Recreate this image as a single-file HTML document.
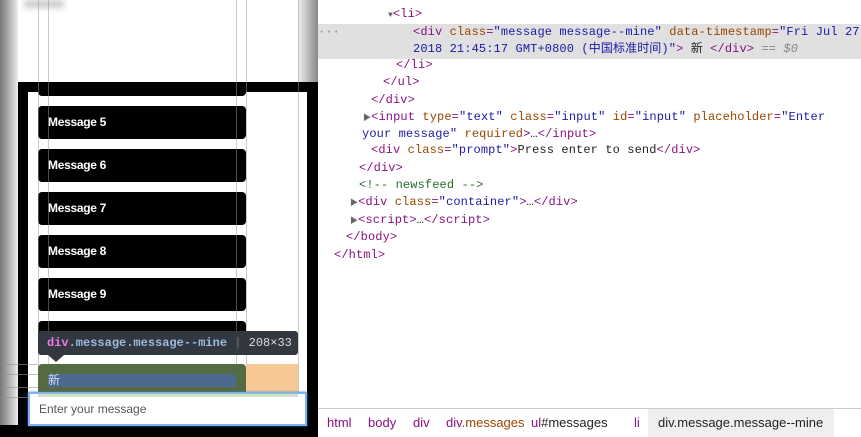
<!DOCTYPE html>
<html><head><meta charset="utf-8"><style>
*{margin:0;padding:0;box-sizing:border-box}
body{width:861px;height:437px;overflow:hidden;position:relative;background:#000;font-family:"Liberation Sans",sans-serif}
.abs{position:absolute}
.msg{position:absolute;left:38px;width:208px;height:33px;background:#000;border-radius:4px;color:#fff;font-size:12px;font-weight:bold;line-height:33px;padding-left:10px;letter-spacing:-0.3px}
.dt{position:absolute;left:318px;top:0;width:543px;height:437px;background:#fff;font-family:"Liberation Mono","Noto Sans CJK SC",monospace;font-size:12px;letter-spacing:0.12px;color:#881280}
.ln{position:absolute;white-space:pre;line-height:17px}
.a{color:#994500}.v{color:#1a1aa6}.t{color:#222}.c{color:#236e25}.g{color:#888}
.tri{font-size:8px;color:#666}
.bc{position:absolute;top:409px;height:28px;line-height:28px;font-family:'Liberation Sans',sans-serif;font-size:13px;white-space:pre;color:#881280;letter-spacing:0}
</style></head><body>
<div class="abs" style="left:0;top:0;width:18px;height:425px;background:linear-gradient(90deg,#777,#bbb 60%,#eee)"></div>
<div class="abs" style="left:18px;top:0;width:282px;height:82px;background:#fff"></div>
<div class="abs" style="left:24px;top:0;width:40px;height:8px;background:#ccc;filter:blur(3px)"></div>
<div class="abs" style="left:298px;top:0;width:20px;height:82px;background:linear-gradient(90deg,#eee,#888)"></div>
<div class="abs" style="left:18px;top:82px;width:300px;height:348px;background:#000"></div>
<div class="abs" style="left:28px;top:92px;width:279px;height:300px;background:#fff"></div>
<div class="abs" style="left:38px;top:82px;width:208px;height:14px;background:#000;border-radius:0 0 4px 4px"></div>
<div class="msg" style="top:106px">Message 5</div>
<div class="msg" style="top:149px">Message 6</div>
<div class="msg" style="top:192px">Message 7</div>
<div class="msg" style="top:235px">Message 8</div>
<div class="msg" style="top:278px">Message 9</div>
<div class="msg" style="top:321px"></div>
<div class="abs" style="left:38px;top:0;width:1px;height:397px;background:rgba(150,150,150,.5)"></div>
<div class="abs" style="left:48px;top:0;width:1px;height:397px;background:rgba(150,150,150,.5)"></div>
<div class="abs" style="left:236px;top:0;width:1px;height:397px;background:rgba(150,150,150,.5)"></div>
<div class="abs" style="left:246px;top:0;width:1px;height:397px;background:rgba(150,150,150,.5)"></div>
<div class="abs" style="left:298px;top:0;width:1px;height:397px;background:rgba(150,150,150,.5)"></div>
<div class="abs" style="left:0;top:364px;width:38px;height:1px;background:rgba(150,150,150,.6)"></div>
<div class="abs" style="left:0;top:374px;width:38px;height:1px;background:rgba(150,150,150,.6)"></div>
<div class="abs" style="left:0;top:387px;width:38px;height:1px;background:rgba(150,150,150,.6)"></div>
<div class="abs" style="left:0;top:397px;width:38px;height:1px;background:rgba(150,150,150,.6)"></div>
<div class="abs" style="left:38px;top:364px;width:208px;height:33px;background:#546b44;border-radius:4px 4px 0 0"></div>
<div class="abs" style="left:48px;top:374px;width:188px;height:13px;background:#4b6a8e;color:#cfe0f5;font-size:12px;line-height:13px;font-family:'Liberation Sans','Noto Sans CJK SC',sans-serif">新</div>
<div class="abs" style="left:246px;top:364px;width:52px;height:33px;background:#f6c896"></div>
<div class="abs" style="left:38px;top:331px;width:260px;height:24px;background:#333740;border-radius:3px;font-family:'Liberation Mono',monospace;font-size:12px;font-weight:bold;line-height:24px;padding-left:9px;color:#9bbbdc;white-space:pre"><span style="color:#ee78e6">div</span>.message.message--mine <span style="color:#777;font-weight:normal">|</span> <span style="color:#ddd;font-weight:normal">208×33</span></div>
<div class="abs" style="left:48px;top:355px;width:0;height:0;border-left:8px solid transparent;border-right:8px solid transparent;border-top:7px solid #333740"></div>
<div class="abs" style="left:28px;top:392px;width:279px;height:34px;background:#fff;border:2px solid #7fb2ee;box-shadow:0 0 2px #3b86e0;font-size:12px;color:#555;line-height:30px;padding-left:9px">Enter your message</div>
<div class="abs" style="left:38px;top:393px;width:260px;height:4px;background:rgba(160,200,150,.5)"></div>

<div class="dt">
<div class="abs" style="left:0;top:24px;width:543px;height:35px;background:#e0e0e0"></div>
<div class="ln" style="left:0;top:24px;color:#888">···</div>
<div class="ln" style="left:70px;top:6px"><span class="tri">▼</span>&lt;li&gt;</div>
<div class="ln" style="left:95px;top:24px">&lt;div <span class="a">class</span>=<span class="v">"message message--mine"</span> <span class="a">data-timestamp</span>=<span class="v">"Fri Jul 27</span></div>
<div class="ln" style="left:95px;top:41px"><span class="v">2018 21:45:17 GMT+0800 (中国标准时间)"</span>&gt; <span class="t">新</span> &lt;/div&gt; <span class="g">== <i>$0</i></span></div>
<div class="ln" style="left:78px;top:57px">&lt;/li&gt;</div>
<div class="ln" style="left:65px;top:74px">&lt;/ul&gt;</div>
<div class="ln" style="left:53px;top:92px">&lt;/div&gt;</div>
<div class="ln" style="left:45px;top:109px"><span class="tri">▶</span>&lt;input <span class="a">type</span>=<span class="v">"text"</span> <span class="a">class</span>=<span class="v">"input"</span> <span class="a">id</span>=<span class="v">"input"</span> <span class="a">placeholder</span>=<span class="v">"Enter</span></div>
<div class="ln" style="left:44px;top:126px"><span class="v">your message"</span> <span class="a">required</span>&gt;<span class="t">…</span>&lt;/input&gt;</div>
<div class="ln" style="left:53px;top:142px">&lt;div <span class="a">class</span>=<span class="v">"prompt"</span>&gt;<span class="t">Press enter to send</span>&lt;/div&gt;</div>
<div class="ln" style="left:41px;top:160px">&lt;/div&gt;</div>
<div class="ln c" style="left:41px;top:177px">&lt;!-- newsfeed --&gt;</div>
<div class="ln" style="left:32px;top:194px"><span class="tri">▶</span>&lt;div <span class="a">class</span>=<span class="v">"container"</span>&gt;<span class="t">…</span>&lt;/div&gt;</div>
<div class="ln" style="left:32px;top:212px"><span class="tri">▶</span>&lt;script&gt;<span class="t">…</span>&lt;/script&gt;</div>
<div class="ln" style="left:28px;top:229px">&lt;/body&gt;</div>
<div class="ln" style="left:16px;top:247px">&lt;/html&gt;</div>
<div class="abs" style="left:0;top:408px;width:543px;height:1px;background:#ccc"></div>
<div class="abs" style="left:330px;top:409px;width:186px;height:28px;background:#efefef"></div>
<div class="bc" style="left:9px">html</div>
<div class="bc" style="left:50px">body</div>
<div class="bc" style="left:95px">div</div>
<div class="bc" style="left:128px">div<span style="color:#994500">.messages</span></div>
<div class="bc" style="left:213px">ul<span style="color:#222">#messages</span></div>
<div class="bc" style="left:316px">li</div>
<div class="bc" style="left:340px;color:#222">div.message.message--mine</div>
</div>
</body></html>
